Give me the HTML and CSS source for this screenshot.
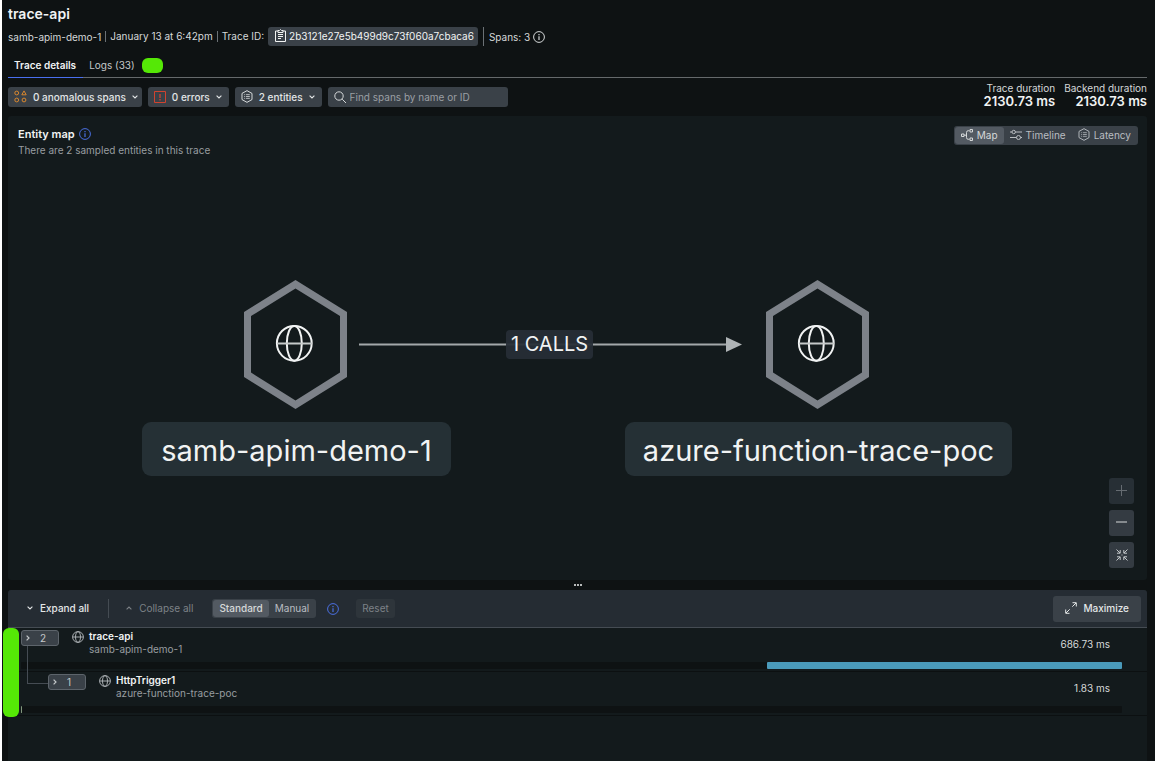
FILE: index.html
```html
<!DOCTYPE html>
<html lang="en">
<head>
<meta charset="utf-8">
<title>trace-api</title>
<link rel="stylesheet" href="styles.css">
</head>
<body>
<svg class="defs" aria-hidden="true">
  <symbol id="globe" viewBox="0 0 12 12"><g fill="none" stroke="currentColor"><circle cx="6" cy="6" r="5.4"/><ellipse cx="6" cy="6" rx="2.5" ry="5.4"/><path d="M.6 6h10.800"/></g></symbol>
  <symbol id="down" viewBox="0 0 6 4"><path d="M.6.6 3 3 5.400.6" fill="none" stroke="currentColor" stroke-width="1.100"/></symbol>
  <symbol id="info" viewBox="0 0 12 12"><circle cx="6" cy="6" r="5.400" fill="none" stroke="currentColor"/><path d="M6 5.200v3.800M6 3v1.200" fill="none" stroke="currentColor" stroke-width="1.200"/></symbol>
  <symbol id="hex" viewBox="0 0 12 14"><g fill="none" stroke="currentColor"><path d="M6 .7 11.400 3.700v6.600L6 13.300.6 10.300V3.700z"/><path d="M3 5h1M5 5h4M3 7h1M5 7h4M3 9h1M5 9h4" stroke-width=".8"/></g></symbol>
</svg>
<main class="page">
  <header class="head">
    <h1 class="title">trace-api</h1>
    <div class="meta">
      <span>samb-apim-demo-1</span>
      <span class="meta-item">January 13 at 6:42pm</span>
      <span class="meta-item">Trace ID:</span>
      <button class="trace-id" type="button">
        <svg width="11" height="13" viewBox="0 0 11 13"><path d="M3 2H.5v10.500h10V2H8M3 1.500h1.500L5.500.5l1 1H8v2H3zM3 5.500h5M3 7.500h5M3 9.500h3" fill="none" stroke="currentColor"/></svg>
        2b3121e27e5b499d9c73f060a7cbaca6</button>
      <span class="spans">Spans: 3 <svg width="12" height="12"><use href="#info"/></svg></span>
    </div>
    <nav class="tabs">
      <a class="tab tab-on" href="#details">Trace details</a>
      <a class="tab" href="#logs">Logs (33)</a>
      <span class="tab-mark"></span>
    </nav>
  </header>

  <div class="filters">
    <button class="filter anomalous" type="button">
      <svg class="orange" width="13" height="13" viewBox="0 0 13 13"><g fill="none" stroke="currentColor"><circle cx="2.700" cy="3" r="1.900"/><path d="M10 .9 12.200 4.800H7.800z"/><circle cx="2.700" cy="10" r="1.900"/><circle cx="10" cy="10" r="1.900"/></g></svg>
      0 anomalous spans<svg class="chev" width="6" height="4"><use href="#down"/></svg></button>
    <button class="filter" type="button">
      <svg class="red" width="12" height="12" viewBox="0 0 12 12"><path d="M.5.5h11v11H.5z" fill="none" stroke="currentColor"/><path d="M6 3v4M6 8v1.500" stroke="currentColor" stroke-width="1.300"/></svg>
      0 errors<svg class="chev" width="6" height="4"><use href="#down"/></svg></button>
    <button class="filter" type="button">
      <svg width="12" height="13"><use href="#hex"/></svg>
      2 entities<svg class="chev" width="6" height="4"><use href="#down"/></svg></button>
    <label class="search">
      <svg width="13" height="13" viewBox="0 0 13 13"><circle cx="5" cy="5" r="4.200" fill="none" stroke="currentColor"/><path d="m8.200 8.200 3.800 3.800" stroke="currentColor"/></svg>
      <input type="text" placeholder="Find spans by name or ID" aria-label="Find spans by name or ID">
    </label>
    <dl class="durations">
      <div><dt>Trace duration</dt><dd>2130.73 ms</dd></div>
      <div><dt>Backend duration</dt><dd>2130.73 ms</dd></div>
    </dl>
  </div>

  <section class="map">
    <div class="map-head">
      <div>
        <h2 class="map-title">Entity map <svg class="blue" width="12" height="12"><use href="#info"/></svg></h2>
        <p class="map-sub">There are 2 sampled entities in this trace</p>
      </div>
      <div class="segment">
        <button class="seg seg-on" type="button"><svg width="12" height="12" viewBox="0 0 12 12"><g fill="none" stroke="currentColor"><path d="M.5 5h2.500v2.500H.5zM3 6.200h2.500M8.500 1.700H7.200q-1.700 0-1.700 1.700v5.200q0 1.700 1.700 1.700h1.300"/><path d="M9 .5h2.500V3H9zM9 9h2.500v2.500H9z"/></g></svg>Map</button>
        <button class="seg" type="button"><svg width="12" height="12" viewBox="0 0 12 12"><g fill="none" stroke="currentColor"><path d="M0 3h2M5.500 3H12M0 8.500h6.500M10.500 8.500H12"/><circle cx="3.700" cy="3" r="1.700"/><circle cx="8.500" cy="8.500" r="2"/></g></svg>Timeline</button>
        <button class="seg" type="button"><svg width="12" height="13"><use href="#hex"/></svg>Latency</button>
      </div>
    </div>

    <div class="stage">
      <svg class="graph" width="871" height="196" viewBox="0 0 871 196">
        <g fill="#7d8289" fill-rule="evenodd">
          <path id="node" d="M153.500 0 205 32V97L153.500 129 102 97V32zM153.500 8.500 109 36V92.500L153.500 120.500 198 92.500V36z"/>
          <use href="#node" x="522"/>
        </g>
        <g id="globe-big" fill="none" stroke="#f1f3f3" stroke-width="2"><circle cx="152.300" cy="63.300" r="17.400"/><ellipse cx="152.300" cy="63.300" rx="7.500" ry="17.400"/><path d="M135 63.500h35" stroke="#c5c9c9"/></g>
        <use href="#globe-big" x="522"/>
        <path d="M217 64.500h368" stroke="#a3a8aa" stroke-width="2"/>
        <path d="M584 57 600 64.500 584 72z" fill="#afb4b6"/>
      </svg>
      <span class="calls">1 CALLS</span>
      <span class="node-label node-a">samb-apim-demo-1</span>
      <span class="node-label node-b">azure-function-trace-poc</span>
    </div>

    <div class="zoom">
      <button class="zoom-btn dim" type="button" aria-label="Zoom in"><svg width="11" height="12" viewBox="0 0 11 12"><path d="M5.500 0v11M0 5.500h11" stroke="currentColor"/></svg></button>
      <button class="zoom-btn" type="button" aria-label="Zoom out"><svg width="11" height="12" viewBox="0 0 11 12"><path d="M0 5h11" stroke="#858a8e" stroke-width="2"/></svg></button>
      <button class="zoom-btn" type="button" aria-label="Fit"><svg width="12" height="12" viewBox="0 0 12 12"><path d="m.5.5 3.500 3.500M1 4.200h3.200V1M11.500.5 8 4M11 4.200H7.800V1M.5 11.500 4 8M1 7.800h3.200V11M11.500 11.500 8 8M11 7.800H7.800V11M5.500 6h1" fill="none" stroke="currentColor"/></svg></button>
    </div>
  </section>

  <div class="handle"><i></i><i></i><i></i></div>

  <section class="waterfall">
    <div class="toolbar">
      <button class="plain" type="button"><svg width="6" height="4"><use href="#down"/></svg>Expand all</button>
      <button class="plain collapse" type="button" disabled><svg class="flip" width="6" height="4"><use href="#down"/></svg>Collapse all</button>
      <div class="segment">
        <button class="seg seg-on strong" type="button">Standard</button>
        <button class="seg" type="button">Manual</button>
      </div>
      <svg class="blue" width="12" height="12"><use href="#info"/></svg>
      <button class="reset" type="button" disabled>Reset</button>
      <button class="maximize" type="button"><svg width="12" height="12" viewBox="0 0 12 12"><path d="M7.500.7h3.800v3.800M11 1 7.300 4.700M4.500 11.300H.7V7.500M1 11l3.700-3.700" fill="none" stroke="currentColor"/></svg>Maximize</button>
    </div>
    <ul class="rows">
      <li class="row">
        <div class="span-line">
          <button class="count" type="button"><svg width="4" height="6" viewBox="0 0 4 6"><path d="M.6.6 3 3 .6 5.400" fill="none" stroke="currentColor" stroke-width="1.200"/></svg>2</button>
          <svg class="span-icon" width="12" height="12"><use href="#globe"/></svg>
          <div class="names"><strong>trace-api</strong><span>samb-apim-demo-1</span></div>
          <span class="time">686.73 ms</span>
        </div>
        <div class="track"><div class="bar" style="margin-left:67.800%;width:32.200%"></div></div>
      </li>
      <li class="row child">
        <div class="span-line">
          <button class="count" type="button"><svg width="4" height="6" viewBox="0 0 4 6"><path d="M.6.6 3 3 .6 5.400" fill="none" stroke="currentColor" stroke-width="1.200"/></svg>1</button>
          <svg class="span-icon" width="12" height="12"><use href="#globe"/></svg>
          <div class="names"><strong>HttpTrigger1</strong><span>azure-function-trace-poc</span></div>
          <span class="time">1.83 ms</span>
        </div>
        <div class="track"><div class="bar bar-thin" style="width:.1%"></div></div>
      </li>
    </ul>
    <div class="marker"></div>
  </section>
</main>
</body>
</html>
```
FILE: styles.css
```css
* { box-sizing: border-box; }
body {
  margin: 0;
  background: #0e1213;
  border-left: 2px solid #fff;
  font-family: Inter, "Liberation Sans", sans-serif;
  font-size: 10px;
  line-height: 14px;
  color: #d5d8d9;
}
h1, h2, p, ul, dl, dd { margin: 0; padding: 0; }
svg { display: block; flex: none; overflow: visible; }
button, input { font: inherit; color: inherit; border: 0; margin: 0; padding: 0; background: none; white-space: nowrap; }
button { display: flex; align-items: center; cursor: pointer; }
.defs { position: absolute; width: 0; height: 0; }
.page { display: flex; flex-direction: column; min-height: 100vh; padding: 0 8px 0 6px; }
.blue { color: #4a6fe0; }
.orange { color: #d9872e; }
.red { color: #d0432f; }

.title { padding-top: 5px; font-size: 14px; line-height: 18px; font-weight: 600; color: #f1f3f3; }
.meta { display: flex; align-items: center; margin-top: 4px; height: 19px; white-space: nowrap; }
.meta-item { margin-left: 4px; padding-left: 4px; border-left: 1px solid #6b7175; line-height: 11px; }
.trace-id { gap: 3px; height: 19px; margin-left: 4px; padding: 0 4px 2px 7px; background: #3a4148; border-radius: 3px; color: #f1f3f3; }
.spans { display: flex; align-items: center; gap: 3px; height: 19px; margin-left: 5px; padding-left: 5px; border-left: 1px solid #6b7175; }
.tabs { display: flex; margin-top: 6px; height: 26px; border-bottom: 1px solid #65696b; }
.tab { height: 26px; padding: 6px 7px 0 6px; color: #c4c8ca; text-decoration: none; white-space: nowrap; }
.tab-on { border-bottom: 1px solid #4a6ff0; font-weight: 600; color: #f1f3f3; }
.tab-mark { width: 21px; height: 15px; margin-top: 6px; border-radius: 6px; background: #55e806; }

.filters { display: flex; align-items: flex-start; gap: 6px; height: 38px; padding-top: 9px; }
.filter { gap: 6px; height: 20px; padding: 0 7px 1px 6px; background: #3a4148; border-radius: 3px; font-weight: 500; color: #e3e6e7; }
.anomalous { padding-right: 4px; }
.search { display: flex; align-items: center; gap: 3px; width: 180px; height: 20px; padding: 0 6px; background: #3a4148; border-radius: 3px; }
.search input { flex: 1; min-width: 0; padding-bottom: 1px; outline: 0; }
.search input::placeholder { color: #9a9fa4; opacity: 1; }
.durations { display: flex; gap: 9px; margin-left: auto; margin-top: -6px; text-align: right; white-space: nowrap; }
.durations dd { font-size: 13px; line-height: 13px; font-weight: 600; color: #f1f3f3; }

.map { position: relative; flex: none; min-height: 464px; background: #131a1c; border-radius: 3px; }
.map-head { display: flex; justify-content: space-between; align-items: flex-start; padding: 10px 9px 0 10px; }
.map-title { display: flex; align-items: center; gap: 4px; font-size: 11px; line-height: 16px; font-weight: 600; color: #f1f3f3; }
.map-sub { margin-top: 1px; color: #989da0; }
.segment { display: flex; height: 19px; padding: 1px; background: #3a4148; border-radius: 3px; }
.seg { gap: 4px; padding: 0 6px 2px; border-radius: 3px; color: #b9bdc1; }
.seg-on { background: #535a62; color: #d5d8d9; }
.strong { font-weight: 500; }
.stage { position: relative; width: 871px; height: 196px; margin: 123px auto 0; }
.calls { position: absolute; left: 364px; top: 50px; width: 87px; height: 29px; background: #262e36f0; border-radius: 4px; font-size: 20px; line-height: 28px; text-align: center; color: #f1f3f3; }
.node-label { position: absolute; top: 142px; height: 54px; border-radius: 9px; background: #253035; font-size: 29px; line-height: 58px; text-align: center; color: #f1f3f3; white-space: nowrap; }
.node-a { left: 0; width: 309px; }
.node-b { left: 483px; width: 387px; }
.zoom { position: absolute; right: 13px; bottom: 12px; display: grid; gap: 6px; }
.zoom-btn { justify-content: center; width: 25px; height: 26px; background: #343b42; border-radius: 3px; color: #c4c8ca; }
.dim { background: #272f35; color: #666c72; }

.handle { display: flex; align-items: center; justify-content: center; gap: 1px; height: 10px; }
.handle i { width: 2px; height: 2px; border-radius: 1px; background: #f1f3f3; }

.waterfall { position: relative; flex: 1; background: #131a1c; border-radius: 3px 3px 0 0; }
.toolbar { display: flex; align-items: center; height: 38px; padding: 0 6px 0 19px; background: #252c33; border-bottom: 1px solid #454c53; border-radius: 3px 3px 0 0; }
.plain { gap: 7px; padding-bottom: 2px; font-weight: 500; color: #e3e6e7; }
.collapse { height: 19px; margin: 0 19px; padding-left: 17px; border-left: 1px solid #454c53; font-weight: 400; color: #7d8287; }
.flip { transform: rotate(180deg); }
.toolbar .blue { margin: 0 17px 0 11px; }
.reset { height: 19px; padding: 0 6px 2px; background: #2e353b; border-radius: 3px; color: #7d8287; }
.maximize { gap: 6px; height: 26px; margin-left: auto; padding: 0 12px 2px; background: #3a4148; border-radius: 3px; font-weight: 500; color: #e3e6e7; }

.rows { list-style: none; }
.row { position: relative; height: 44px; padding: 2px 25px 0 13px; border-bottom: 1px solid #0c1011; }
.span-line { display: flex; align-items: flex-start; height: 32px; }
.child .span-line { padding-left: 27px; }
.child::before { content: ""; position: absolute; left: 19px; top: -26px; width: 20px; height: 37px; border: solid #454c53; border-width: 0 0 1px 1px; }
.count { gap: 10px; width: 38px; height: 16px; padding-left: 4px; background: #3a4148; border: 1px solid #5d646b; border-radius: 3px; color: #c4c8ca; }
.span-icon { margin: 1px 5px 0 13px; color: #a7acaf; }
.names { display: grid; line-height: 13px; color: #989da0; }
.names strong { font-weight: 600; color: #f1f3f3; }
.time { margin: 7px 12px 0 auto; color: #d5d8d9; }
.track { height: 7px; background: #0e1213; border-radius: 1px; }
.bar { height: 7px; background: #4a9aba; border-radius: 1px; }
.bar-thin { background: #81977c; }
.marker { position: absolute; left: -5px; top: 38px; width: 16px; height: 89px; border-radius: 6px; background: #55e806; }
```
